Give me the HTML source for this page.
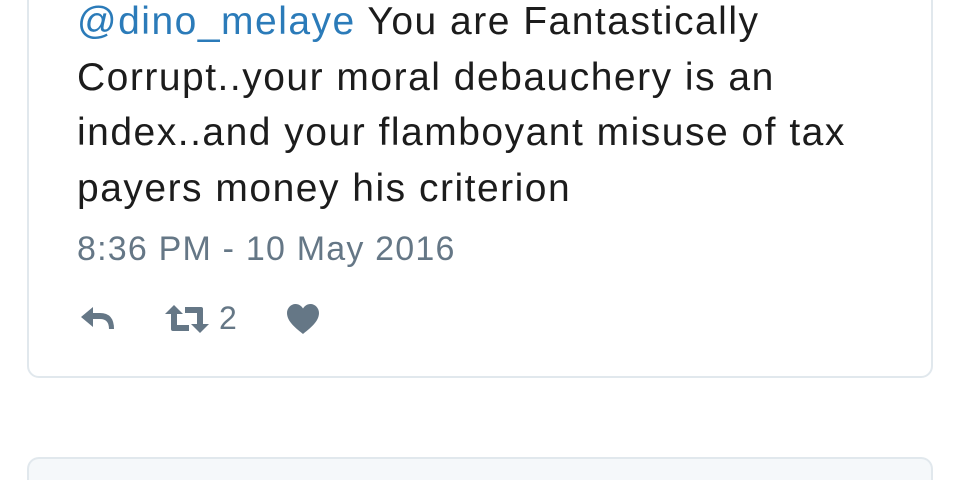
<!DOCTYPE html>
<html><head><style>
html,body{margin:0;padding:0;background:#fff;width:960px;height:480px;overflow:hidden;position:relative;font-family:"Liberation Sans",sans-serif;}
.card{position:absolute;left:27px;top:-40px;width:902px;height:414px;border:2px solid #e1e8ed;border-radius:12px;box-sizing:content-box;}
.card2{position:absolute;left:27px;top:457px;width:902px;height:21px;border:2px solid #e1e8ed;border-bottom:none;border-radius:12px 12px 0 0;background:#f5f8fa;}
.txt{position:absolute;left:77px;top:-6px;font-size:39px;letter-spacing:1.5px;line-height:55.5px;color:#1c1c1c;width:870px;white-space:nowrap;}
.txt a{color:#2b7bb9;text-decoration:none}
.date{position:absolute;left:77px;top:230px;font-size:34px;letter-spacing:1.2px;color:#657786;white-space:nowrap;}
.cnt{position:absolute;left:219px;top:300px;font-size:32px;color:#657786;}
svg{position:absolute}
</style></head><body>
<div class="card"></div>
<div class="card2"></div>
<div class="txt"><a>@dino_melaye</a> You are Fantastically<br>Corrupt..your moral debauchery is an<br>index..and your flamboyant misuse of tax<br>payers money his criterion</div>
<div class="date">8:36 PM - 10 May 2016</div>
<svg style="left:80px;top:305px" width="36" height="28" viewBox="0 0 36 28"><path d="M1 12 L13 2 L13 8 L20 8 Q34 8 34 24 L29 24 Q29 14 20 14 L13 14 L13 22 Z" fill="#657786"/></svg>
<svg style="left:165px;top:305px" width="44" height="28" viewBox="0 0 44 28"><path d="M9 0 L18 9 L12 9 L12 20 L24 20 L24 26 L8 26 Q6 26 6 24 L6 9 L0 9 Z M35 28 L26 19 L32 19 L32 8 L20 8 L20 2 L36 2 Q38 2 38 4 L38 19 L44 19 Z" fill="#657786"/></svg>
<div class="cnt">2</div>
<svg style="left:287px;top:304px" width="32" height="30" viewBox="0 0 32 30"><path d="M16 30 C10 25 0 18 0 9 C0 4 4 0 8.5 0 C12 0 14.5 2 16 4.5 C17.5 2 20 0 23.5 0 C28 0 32 4 32 9 C32 18 22 25 16 30 Z" fill="#657786"/></svg>
</body></html>
